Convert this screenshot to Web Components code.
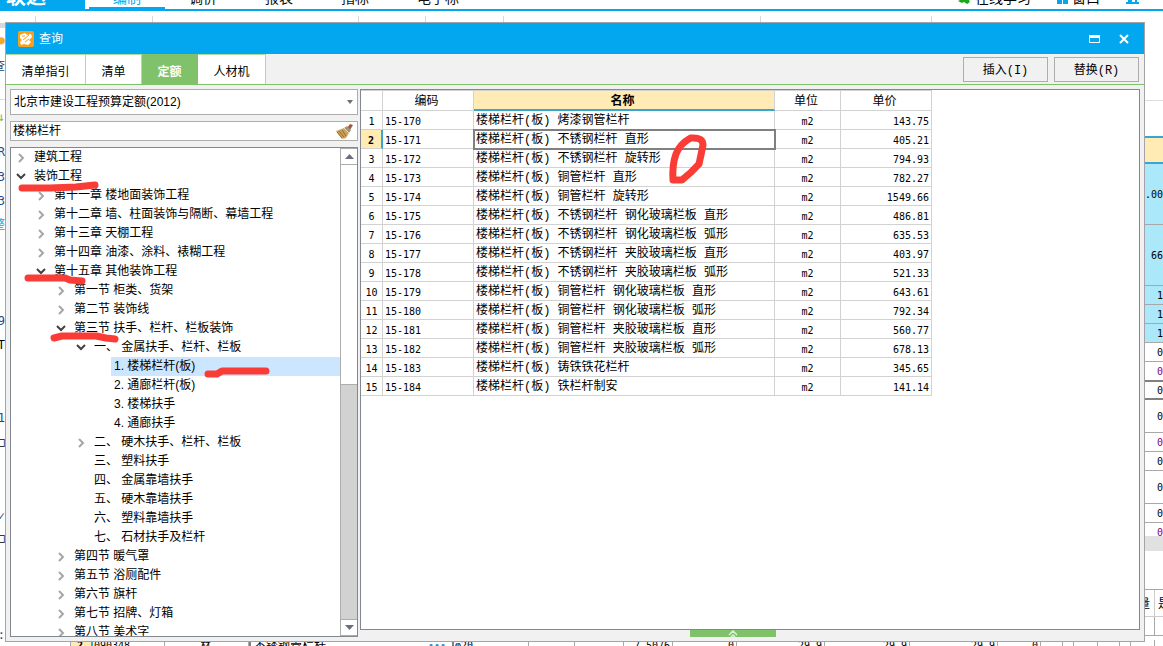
<!DOCTYPE html>
<html lang="zh-CN">
<head>
<meta charset="utf-8">
<title>查询</title>
<style>
  html, body { margin: 0; height: 100%; }
  body { background: #fff; font: 12px/16px "Liberation Sans", "Noto Sans CJK SC", sans-serif; color: #000; overflow: hidden;
    --blue: #02a7f0; --green: #80c269; --gold: #ffebb3; --accent: #38a5d2; --line: #d2d2d2; }
</style>
</head>
<body>
<query-page></query-page>
<script>
const define = (name, html, setup) => customElements.define(name, class extends HTMLElement {
  constructor() {
    super();
    this.attachShadow({ mode: 'open' });
  }
  connectedCallback() {
    if (this.shadowRoot.childNodes.length) return;
    const t = document.createElement('template');
    t.innerHTML = typeof html === 'function' ? html(this) : html;
    this.shadowRoot.append(t.content.cloneNode(true));
    if (setup) setup(this.shadowRoot, this);
  }
});

/* ---------- main window behind the dialog ---------- */
define('app-menu', `
<style>
  :host { display: block; flex: none; }
  nav { display: flex; height: 9px; overflow: hidden; border-bottom: 2px solid var(--blue); font-size: 14px; line-height: 14px; align-items: flex-end; }
  .brand { width: 79px; padding-left: 6px; height: 9px; background: var(--blue); color: #fff; font: bold 20px/20px "Noto Sans CJK SC", sans-serif; display: flex; align-items: flex-end; }
  .brand span { padding-bottom: 3px; }
  a { box-sizing: border-box; width: 76px; text-align: center; color: #111; text-decoration: none; padding-bottom: 4px; }
  a.on { color: var(--blue); padding-bottom: 2px; border-bottom: 2px solid var(--blue); margin-left: 4px; }
  a.wide { width: 90px; }
  .right { margin-left: auto; display: flex; align-items: flex-end; gap: 4px; padding-right: 24px; }
  .right span { padding-bottom: 4px; }
  .right svg { padding-bottom: 5px; flex: none; }
  .right .gap { width: 18px; }
  .ribbon { display: flex; height: 84px; padding-top: 5px; border-bottom: 1px solid #ddd; }
  .ribbon i { box-sizing: border-box; border-right: 1px solid #d8d8d8; flex: none; }
</style>
<nav>
  <div class="brand"><span>联达</span></div>
  <a class="on" href="#">编制</a><a href="#">调价</a><a href="#">报表</a><a href="#">指标</a><a class="wide" href="#">电子标</a>
  <div class="right">
    <svg width="13" height="6"><path d="M3 0h4l1 2 2-2h3l-2 3 1 1-3 2-3-2-2 1-4-2 2-1z" fill="#18a818"/></svg>
    <span>在线学习</span><div class="gap"></div>
    <svg width="11" height="4"><path d="M0 0h5v4H0zM6 0h5v4H6z" fill="#02a7f0"/></svg>
    <span>窗口</span><div class="gap"></div>
    <svg width="13" height="4"><path d="M2 0h4v2h3V0h2v2h2v2H0V2h2z" fill="#02a7f0"/></svg>
  </div>
</nav>
<div class="ribbon"></div>`, root => {
  const r = root.querySelector('.ribbon');
  for (const w of [36, 117, 206, 67, 78, 257, 171]) {
    const i = document.createElement('i');
    i.style.width = w + 'px';
    r.append(i);
  }
});

/* the visible left margin of the main window: [height, text, colour, background] */
const leftRows = [[1,''],[5,'','','#d8d8d8'],[24,'●','#f5a623'],[27,'查','#26426b'],[20,''],[1,'','','#ddd'],[8,''],[17,'↓','#5cc24a'],[15,''],
  [24,'R','#1c4b8c'],[25,'3','#1c4b8c'],[24,'3','#1c4b8c'],[24,'整','#0aa4d8'],[72,''],[24,'9','#1c4b8c'],[24,'T'],[49,''],
  [23,'1','#1c4b8c'],[26,'□'],[50,''],[22,'✓','#1c4b8c'],[22,'□'],[81,''],[10,':','#1c4b8c']];
define('left-margin', `
<style>
  :host { display: flex; flex-direction: column; width: 5px; overflow: hidden; font: 12px/12px "DejaVu Sans Mono", "Noto Sans CJK SC", monospace; }
  div { flex: none; display: flex; align-items: center; justify-content: flex-end; overflow: hidden; }
</style>`, root => {
  for (const [h, t, c, bg] of leftRows) {
    const d = document.createElement('div');
    d.style.height = h + 'px';
    if (c) d.style.color = c;
    if (bg) d.style.background = bg;
    d.textContent = t;
    root.append(d);
  }
});

/* amounts column of the main grid: [height, text, class] */
const sums = [[61,'.00','b'],[61,'66','b'],[19,'1','b'],[19,'1','b'],[19,'1','b'],[19,'0'],[20,'0','p t'],[18,'0','t'],[33,'0'],[19,'0','p'],[19,'0'],[33,'0'],[19,'0'],[13,'0','p n']];
define('sum-column', `
<style>
  :host { display: flex; flex-direction: column; width: 18px; overflow: hidden; font: 10px/12px "DejaVu Sans Mono", monospace; }
  div { box-sizing: border-box; flex: none; display: flex; align-items: center; justify-content: flex-end; border-bottom: 1px solid #a8a8a8; overflow: hidden; padding-top: 2px; }
  .b { background: #abe8fa; } .p { color: #800080; } .t { border-bottom: 2px solid #808080; } .n { border: 0; align-items: flex-start; padding-top: 4px; }
  .head { height: 28px; background: var(--gold); border-top: 2px solid var(--accent); border-bottom: 2px solid var(--accent); }
  .bar { height: 15px; background: #e1e1e1; border: 0; }
  .blank { height: 38px; border: 0; }
  .green { height: 1px; border: 0; padding: 0; background: var(--green); }
  .lower { height: 27px; padding: 0; border-color: #ccc; font: 12px/12px "Noto Sans CJK SC", sans-serif; display: grid; grid-template-columns: 10px 8px; }
  .lower span { box-sizing: border-box; overflow: hidden; display: flex; height: 100%; align-items: center; border-right: 1px solid #ccc; justify-content: flex-end; padding-right: 4px; }
  .lower span + span { border: 0; justify-content: flex-start; padding: 0 0 0 3px; }
  .row { height: 19px; padding: 0; display: grid; grid-template-columns: 10px 8px; }
  .row span { box-sizing: border-box; height: 100%; border-right: 1px solid #a8a8a8; }
</style>`, root => {
  const add = (h, t, c) => {
    const d = document.createElement('div');
    if (h) d.style.height = h + 'px';
    d.className = c || '';
    d.innerHTML = t;
    root.append(d);
  };
  add(0, '', 'head');
  sums.forEach(s => add(...s));
  add(0, '', 'bar'); add(0, '', 'blank'); add(0, '', 'green');
  add(0, '<span>量</span><span>是</span>', 'lower');
  add(0, '<span></span>', 'row');
});

/* row of the main grid that shows under the dialog: [width, text, class] */
const under = [[71,''],[22,'2','sel'],[72,'090348','l'],[84,'材','c'],[179,'不锈钢管栏杆','l k'],[26,'•••','dots'],[75,'φ20','l'],[46,'–','c'],[49,''],[49,'7.5076'],[64,'0'],[88,'29.9'],[85,'29.9'],[88,'29.9'],[43,'0'],[22,''],[11,''],[24,''],[22,''],[11,''],[24,'']];
define('under-row', `
<style>
  :host { display: flex; flex: none; height: 6px; overflow: hidden; font: 10px/12px "DejaVu Sans Mono", "Noto Sans CJK SC", monospace; }
  span { box-sizing: border-box; flex: none; height: 12px; border-right: 1px solid #a8a8a8; text-align: right; padding-right: 2px; white-space: nowrap; }
  .l { text-align: left; padding-left: 1px; } .c { text-align: center; } .k { border-left: 2px solid #808080; border-right: 0; padding-left: 3px; font-size: 12px; }
  .sel { background: var(--gold); border-right: 2px solid var(--accent); font-weight: bold; text-align: center; }
  .dots { border-right: 2px solid #808080; color: #3a8ac4; text-align: left; }
</style>`, root => {
  for (const [w, t, c] of under) {
    const s = document.createElement('span');
    s.style.width = w + 'px';
    s.className = c || '';
    s.textContent = t;
    root.append(s);
  }
});

/* ---------- dialog parts ---------- */
define('dialog-title', `
<style>
  :host { display: flex; flex: none; align-items: center; height: 31px; background: var(--blue); color: #fff; padding: 0 12px; }
  h1 { font: inherit; margin: 0 auto 0 5px; }
  button { border: 0; padding: 0; background: none; display: flex; margin-left: 16px; }
</style>
<svg width="16" height="16"><rect width="16" height="16" rx="2" fill="#f9a01b"/><path d="M2 4l5-2 2 2 4-1 1 3-3 3 2 2-3 3-4-1-3 1-1-3 2-2-2-2z" fill="#fff"/><path d="M4 5l3 0M5 9l6-5M7 11l4-3" stroke="#f9a01b"/></svg>
<h1><slot></slot></h1>
<button aria-label="最大化"><svg width="11" height="8"><path d="M.5 1.5h10v6H.5z" fill="none" stroke="#fff"/><path d="M0 0h11v3H0z" fill="#fff"/></svg></button>
<button aria-label="关闭"><svg width="16" height="10"><path d="M4 1l8 8M12 1l-8 8" stroke="#fff" stroke-width="2"/></svg></button>`);

define('tool-tabs', `
<style>
  :host { display: flex; flex: none; height: 30px; border-bottom: 1px solid var(--green); padding-right: 5px; align-items: flex-start; gap: 6px; }
  div { display: flex; margin-right: auto; height: 30px; }
  button { font: inherit; box-sizing: border-box; color: #000; }
  div button { border: 0; border-top: 1px solid #a8e09a; border-right: 1px solid #a8e09a; background: #fff; width: 56px; padding: 4px 0 0; }
  div .w4 { width: 80px; } div .w3 { width: 68px; }
  div .on { background: var(--green); border-color: var(--green); color: #fff; font-weight: bold; }
  .act { width: 85px; height: 25px; margin-top: 3px; border: 1px solid #adadad; background: #f1f1f1; padding: 2px 0 0; font-family: "Liberation Mono", "Noto Sans CJK SC", monospace; }
</style>
<div role="tablist">
  <button role="tab" class="w4">清单指引</button><button role="tab">清单</button><button role="tab" class="on" aria-selected="true">定额</button><button role="tab" class="w3">人材机</button>
</div>
<button class="act">插入(I)</button><button class="act">替换(R)</button>`);

define('catalog-filter', `
<style>
  :host { display: flex; flex: none; flex-direction: column; gap: 6px; }
  .f { display: flex; align-items: center; box-sizing: border-box; border: 1px solid #adadad; background: #fff; padding: 0 4px 0 3px; }
  .combo { height: 26px; } .search { height: 20px; padding-left: 2px; }
  select, input { appearance: none; flex: 1; min-width: 0; border: 0; outline: 0; padding: 0; margin: 0; background: none; font: inherit; color: #000; }
</style>
<label class="f combo"><select aria-label="定额库"><option>北京市建设工程预算定额(2012)</option></select>
<svg width="7" height="4"><path d="M1 0h6L4 4z" fill="#6d6d75"/></svg></label>
<label class="f search"><input aria-label="关键字" value="楼梯栏杆">
<svg width="17" height="15"><path d="M11 4l3-4 3 1-3 5z" fill="#a25a3c"/><path d="M8 4l3-2 4 4-2 3z" fill="#9a9488"/><path d="M0 7l8-3 5 5-3 5-4 1z" fill="#cfa25a"/><path d="M3 7l5 6M6 6l4 6M1 8l5 6" stroke="#8d6a36" stroke-width="1"/><path d="M8 4l5 5" stroke="#f0d9a8" stroke-width="1"/></svg></label>`);

define('tree-item', el => {
  const s = el.getAttribute('state');
  const shape = s === 'open' ? '<path d="M1 2l4 4 4-4" fill="none" stroke="#404040" stroke-width="2"/>'
    : s === 'closed' ? '<path d="M3 1l4 4-4 4" fill="none" stroke="#a6a6a6" stroke-width="2"/>' : '';
  return `
<style>
  :host { display: flex; flex: none; height: 19px; align-items: center; margin-left: calc(20px * var(--level)); white-space: pre; }
  svg { width: 10px; height: 10px; padding: 0 5px; flex: none; }
  span { flex: 1; line-height: 19px; padding-left: 3px; }
  :host([selected]) span { background: #cde6ff; }
</style>
<svg>${shape}</svg><span><slot></slot></span>`;
}, (root, el) => el.style.setProperty('--level', el.getAttribute('level')));

const nodes = [[0,'closed','建筑工程'],[0,'open','装饰工程'],[1,'closed','第十一章 楼地面装饰工程'],[1,'closed','第十二章 墙、柱面装饰与隔断、幕墙工程'],[1,'closed','第十三章 天棚工程'],[1,'closed','第十四章 油漆、涂料、裱糊工程'],[1,'open','第十五章 其他装饰工程'],[2,'closed','第一节 柜类、货架'],[2,'closed','第二节 装饰线'],[2,'open','第三节 扶手、栏杆、栏板装饰'],[3,'open','一、 金属扶手、栏杆、栏板'],[4,'','1. 楼梯栏杆(板)',true],[4,'','2. 通廊栏杆(板)'],[4,'','3. 楼梯扶手'],[4,'','4. 通廊扶手'],[3,'closed','二、 硬木扶手、栏杆、栏板'],[3,'','三、 塑料扶手'],[3,'','四、 金属靠墙扶手'],[3,'','五、 硬木靠墙扶手'],[3,'','六、 塑料靠墙扶手'],[3,'','七、 石材扶手及栏杆'],[2,'closed','第四节 暖气罩'],[2,'closed','第五节 浴厕配件'],[2,'closed','第六节 旗杆'],[2,'closed','第七节 招牌、灯箱'],[2,'closed','第八节 美术字']];
define('catalog-tree', `
<style>
  :host { display: flex; flex: 1; min-height: 0; border: 1px solid #828790; background: #fff; overflow: hidden; }
  .list { flex: 1; min-width: 0; overflow: hidden; display: flex; flex-direction: column; }
  .bar { width: 16px; display: flex; flex-direction: column; background: #d2d2d2; border-left: 1px solid #adadad; }
  .bar button { height: 17px; flex: none; border: 1px solid #adadad; border-width: 1px 0; background: #fff; padding: 0; display: flex; align-items: center; justify-content: center; }
  .thumb { flex: 0 0 45%; background: #fff; border-bottom: 1px solid #adadad; box-sizing: border-box; }
  .bar .down { margin-top: auto; }
</style>
<div class="list" role="tree"></div>
<div class="bar">
  <button aria-label="向上"><svg width="9" height="5"><path d="M0 5h9L4.500 0z" fill="#6b6f7c"/></svg></button>
  <div class="thumb"></div>
  <button class="down" aria-label="向下"><svg width="9" height="5"><path d="M0 0h9L4.500 5z" fill="#6b6f7c"/></svg></button>
</div>`, root => {
  const list = root.querySelector('.list');
  for (const [level, state, text, sel] of nodes) {
    const n = document.createElement('tree-item');
    n.setAttribute('level', level);
    n.setAttribute('state', state);
    n.setAttribute('role', 'treeitem');
    if (sel) n.setAttribute('selected', '');
    n.textContent = text;
    list.append(n);
  }
});

const items = [['烤漆钢管栏杆','143.75'],['不锈钢栏杆 直形','405.21'],['不锈钢栏杆 旋转形','794.93'],['铜管栏杆 直形','782.27'],['铜管栏杆 旋转形','1549.66'],['不锈钢栏杆 钢化玻璃栏板 直形','486.81'],['不锈钢栏杆 钢化玻璃栏板 弧形','635.53'],['不锈钢栏杆 夹胶玻璃栏板 直形','403.97'],['不锈钢栏杆 夹胶玻璃栏板 弧形','521.33'],['铜管栏杆 钢化玻璃栏板 直形','643.61'],['铜管栏杆 钢化玻璃栏板 弧形','792.34'],['铜管栏杆 夹胶玻璃栏板 直形','560.77'],['铜管栏杆 夹胶玻璃栏板 弧形','678.13'],['铸铁铁花栏杆','345.65'],['铁栏杆制安','141.14']];
define('quota-grid', `
<style>
  :host { display: block; flex: 1; min-height: 0; border: 1px solid #828790; background: #fff; overflow: hidden; }
  table { border-collapse: separate; border-spacing: 0; table-layout: fixed; width: 571px; }
  td, th { box-sizing: border-box; border-right: 1px solid var(--line); border-bottom: 1px solid var(--line); padding: 3px 2px 0; height: 19px; line-height: 15px; white-space: nowrap; overflow: hidden; font-weight: normal; }
  thead th { height: 21px; border-top: 1px solid var(--line); padding: 2px 3px 0 0; }
  thead .cur { background: var(--gold); border-bottom: 2px solid var(--accent); font-weight: bold; }
  tbody th, td { font: 10px/15px "DejaVu Sans Mono", monospace; }
  tbody th { padding: 3px 0 0; text-align: center; }
  td:nth-child(3) { font: 12px/15px "Liberation Mono", "Noto Sans CJK SC", monospace; }
  td:nth-child(4) { text-align: center; } td:nth-child(5) { text-align: right; }
  tr.cur th { background: var(--gold); border-right: 2px solid var(--accent); font-weight: bold; }
  tr.cur td:nth-child(3) { outline: 2px solid #808080; outline-offset: -1px; }
</style>
<table>
  <colgroup><col width="22"><col width="91"><col width="301"><col width="66"><col width="91"></colgroup>
  <thead><tr><th></th><th>编码</th><th class="cur">名称</th><th>单位</th><th>单价</th></tr></thead>
  <tbody></tbody>
</table>`, root => {
  root.querySelector('tbody').innerHTML = items.map(([n, p], i) =>
    `<tr${i === 1 ? ' class="cur"' : ''}><th scope="row">${i + 1}</th><td>15-${170 + i}</td><td>楼梯栏杆(板) ${n}</td><td>m2</td><td>${p}</td></tr>`).join('');
});

define('query-dialog', `
<style>
  :host { display: flex; flex-direction: column; box-sizing: border-box; border: 1px solid #a3a3a8; background: #f1f1f1; }
  .body { flex: 1; min-height: 0; display: flex; gap: 2px; padding: 4px; }
  .left { flex: none; width: 348px; display: flex; flex-direction: column; gap: 6px; }
  .right { flex: 1; min-width: 0; display: flex; flex-direction: column; }
  .grip { display: flex; justify-content: center; padding-right: 34px; height: 7px; flex: none; }
  .grip button { width: 86px; height: 7px; border: 0; padding: 0; background: var(--green); display: flex; justify-content: center; }
</style>
<dialog-title>查询</dialog-title>
<tool-tabs></tool-tabs>
<div class="body">
  <div class="left"><catalog-filter></catalog-filter><catalog-tree></catalog-tree></div>
  <div class="right"><quota-grid></quota-grid><div class="grip"><button aria-label="展开"><svg width="10" height="7"><path d="M1 5l4-4 4 4M3 7l2-2 2 2" fill="none" stroke="#dff2d8" stroke-width="1.500"/></svg></button></div></div>
</div>`);

define('red-marks', `
<style>:host { display: block; pointer-events: none; } svg { display: block; width: 100%; height: 100%; }</style>
<svg fill="none" stroke="#fa3c37" stroke-width="7" stroke-linecap="round" stroke-linejoin="round">
  <path d="M22 188L50 188L76 187L95 185"/>
  <path d="M28 278L65 278L70 280L82 281"/>
  <path d="M54 338L62 336L96 336L106 338L115 339"/>
  <path d="M208 374L217 374L222 371L266 371"/>
  <path d="M689 139Q680 144 676 154Q672 165 673 180L682 180Q692 172 699 164Q701 155 703 145Q703 137 691 138"/>
</svg>`);

define('query-page', `
<style>
  :host { display: flex; flex-direction: column; height: 100vh; position: relative; overflow: hidden; }
  .main { flex: 1; min-height: 0; display: flex; justify-content: space-between; }
  left-margin { margin-top: -79px; background: #fff; }
  sum-column { margin-top: 35px; }
  query-dialog { position: absolute; inset: 22px 18px 4px 5px; }
  red-marks { position: absolute; inset: 0; }
</style>
<app-menu></app-menu>
<div class="main"><left-margin></left-margin><sum-column></sum-column></div>
<under-row></under-row>
<query-dialog></query-dialog>
<red-marks></red-marks>`);
</script>
</body>
</html>
